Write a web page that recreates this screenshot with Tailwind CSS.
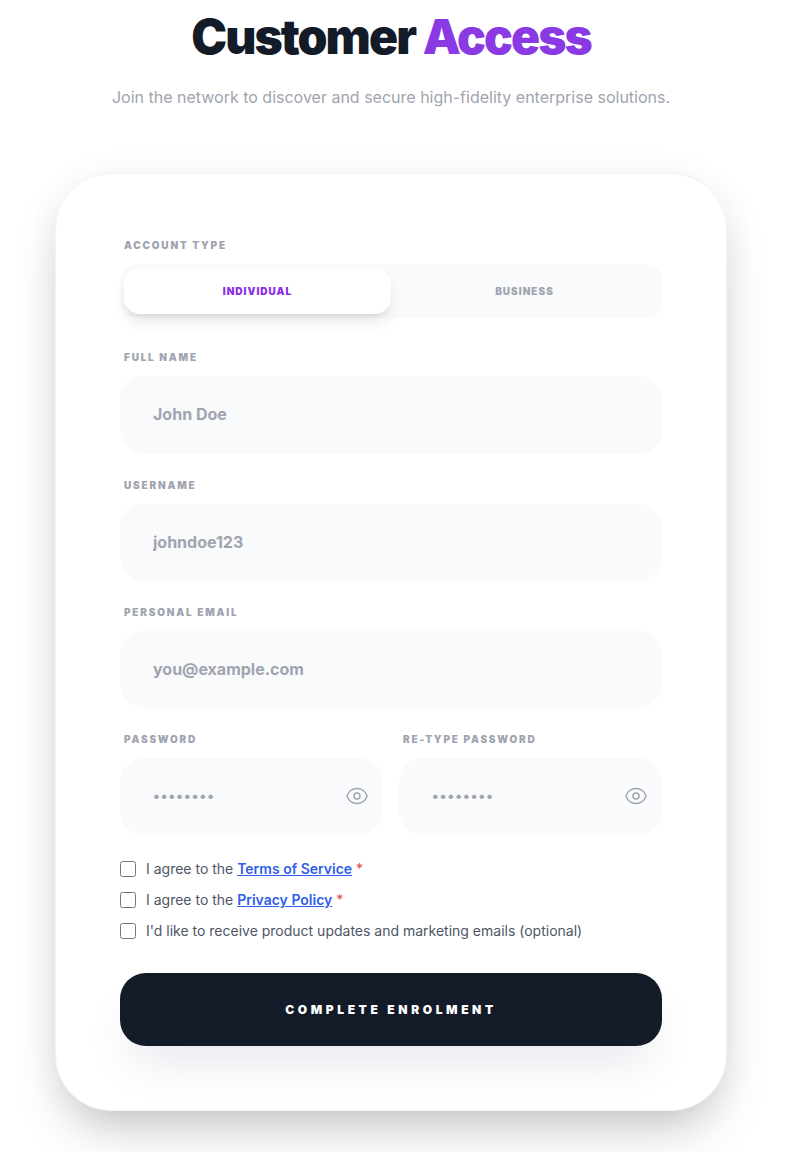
<!DOCTYPE html>
<html lang="en">
<head>
    <meta charset="UTF-8">
    <meta name="viewport" content="width=device-width, initial-scale=1.0">
    <title>Customer Access</title>
    <script src="https://cdn.jsdelivr.net/npm/@tailwindcss/browser@4"></script>
</head>
<body class="bg-white font-['Inter',sans-serif] overflow-hidden">
    <div class="w-[782px] h-[1152px] overflow-visible">
        <!-- Heading -->
        <div class="text-center pt-[13px]">
            <h1 class="text-5xl font-black tracking-[-0.04em] text-[#131a28]">Customer <span class="text-[#8b3ae3]">Access</span></h1>
            <p class="mt-[24px] text-base text-[#a0a4b0] leading-6">Join the network to discover and secure high-fidelity enterprise solutions.</p>
        </div>

        <!-- Card -->
        <div class="w-[672px] mx-auto mt-[64px] bg-white border border-gray-100 rounded-[56px] p-16 shadow-[0_25px_50px_-12px_rgba(0,0,0,0.25),0_0_40px_rgba(0,0,0,0.03)]">
            <label class="block pl-1 text-[10px] leading-[15px] font-black tracking-[0.18em] uppercase text-[#a0a4b0]">Account Type</label>
            <div class="mt-[11px] flex p-1 rounded-2xl bg-gray-50">
                <button class="flex-1 h-[46px] rounded-2xl bg-white shadow-lg text-[10px] font-black tracking-widest uppercase text-[#8b2fe6]">Individual</button>
                <button class="flex-1 h-[46px] rounded-2xl text-[10px] font-black tracking-widest uppercase text-[#a0a4b0]">Business</button>
            </div>

            <label class="block pl-1 mt-[32px] text-[10px] leading-[15px] font-black tracking-[0.18em] uppercase text-[#a0a4b0]">Full Name</label>
            <input type="text" placeholder="John Doe" class="block mt-[11px] w-full h-[78px] pl-[33px] pr-[33px] pb-[2px] rounded-3xl bg-gray-50 font-bold text-base placeholder:text-[#a0a4b0]">

            <label class="block pl-1 mt-[24px] text-[10px] leading-[15px] font-black tracking-[0.18em] uppercase text-[#a0a4b0]">Username</label>
            <input type="text" placeholder="johndoe123" class="block mt-[11px] w-full h-[77px] pl-[33px] pr-[33px] pb-[1px] rounded-3xl bg-gray-50 font-bold text-base placeholder:text-[#a0a4b0]">

            <label class="block pl-1 mt-[24px] text-[10px] leading-[15px] font-black tracking-[0.18em] uppercase text-[#a0a4b0]">Personal Email</label>
            <input type="email" placeholder="you@example.com" class="block mt-[11px] w-full h-[77px] pl-[33px] pr-[33px] pb-[1px] rounded-3xl bg-gray-50 font-bold text-base placeholder:text-[#a0a4b0]">

            <div class="mt-[24px] grid grid-cols-2 gap-4">
                <div>
                    <label class="block pl-1 text-[10px] leading-[15px] font-black tracking-[0.18em] uppercase text-[#a0a4b0]">Password</label>
                    <div class="relative mt-[11px]">
                        <input type="password" placeholder="••••••••" class="block w-full h-[77px] pl-[33px] pr-12 pb-[2px] rounded-3xl bg-gray-50 font-bold text-sm tracking-[1.1px] placeholder:text-[#a0a4b0]">
                        <svg class="absolute right-[14px] top-[26px] w-6 h-6 text-[#a0a4b0]" fill="none" viewBox="0 0 24 24" stroke="currentColor" stroke-width="1.5">
                            <path stroke-linecap="round" stroke-linejoin="round" d="M2.036 12.322a1.012 1.012 0 010-.639C3.423 7.51 7.36 4.5 12 4.5c4.638 0 8.573 3.007 9.963 7.178.07.207.07.431 0 .639C20.577 16.49 16.64 19.5 12 19.5c-4.638 0-8.573-3.007-9.963-7.178z"/>
                            <path stroke-linecap="round" stroke-linejoin="round" d="M15 12a3 3 0 11-6 0 3 3 0 016 0z"/>
                        </svg>
                    </div>
                </div>
                <div>
                    <label class="block pl-1 text-[10px] leading-[15px] font-black tracking-[0.18em] uppercase text-[#a0a4b0]">Re-type Password</label>
                    <div class="relative mt-[11px]">
                        <input type="password" placeholder="••••••••" class="block w-full h-[77px] pl-[33px] pr-12 pb-[2px] rounded-3xl bg-gray-50 font-bold text-sm tracking-[1.1px] placeholder:text-[#a0a4b0]">
                        <svg class="absolute right-[14px] top-[26px] w-6 h-6 text-[#a0a4b0]" fill="none" viewBox="0 0 24 24" stroke="currentColor" stroke-width="1.5">
                            <path stroke-linecap="round" stroke-linejoin="round" d="M2.036 12.322a1.012 1.012 0 010-.639C3.423 7.51 7.36 4.5 12 4.5c4.638 0 8.573 3.007 9.963 7.178.07.207.07.431 0 .639C20.577 16.49 16.64 19.5 12 19.5c-4.638 0-8.573-3.007-9.963-7.178z"/>
                            <path stroke-linecap="round" stroke-linejoin="round" d="M15 12a3 3 0 11-6 0 3 3 0 016 0z"/>
                        </svg>
                    </div>
                </div>
            </div>

            <!-- Agreements -->
            <div class="mt-[24px] flex flex-col gap-[11px] text-sm leading-5 text-[#4f5665]">
                <label class="flex items-center gap-[10px]"><input type="checkbox" class="w-4 h-4 m-0"><span>I agree to the <a href="#" class="font-semibold text-[#2f5ee8] underline">Terms of Service</a> <span class="text-[#e8483f]">*</span></span></label>
                <label class="flex items-center gap-[10px]"><input type="checkbox" class="w-4 h-4 m-0"><span>I agree to the <a href="#" class="font-semibold text-[#2f5ee8] underline">Privacy Policy</a> <span class="text-[#e8483f]">*</span></span></label>
                <label class="flex items-center gap-[10px]"><input type="checkbox" class="w-4 h-4 m-0"><span>I'd like to receive product updates and marketing emails (optional)</span></label>
            </div>

            <button class="block mt-[32px] w-full h-[73px] rounded-[26px] bg-[#131a28] shadow-[0_25px_50px_-12px_#e2e4ea] text-white text-xs font-black tracking-[0.3em] uppercase">Complete Enrolment</button>
        </div>
    </div>
</body>
</html>
